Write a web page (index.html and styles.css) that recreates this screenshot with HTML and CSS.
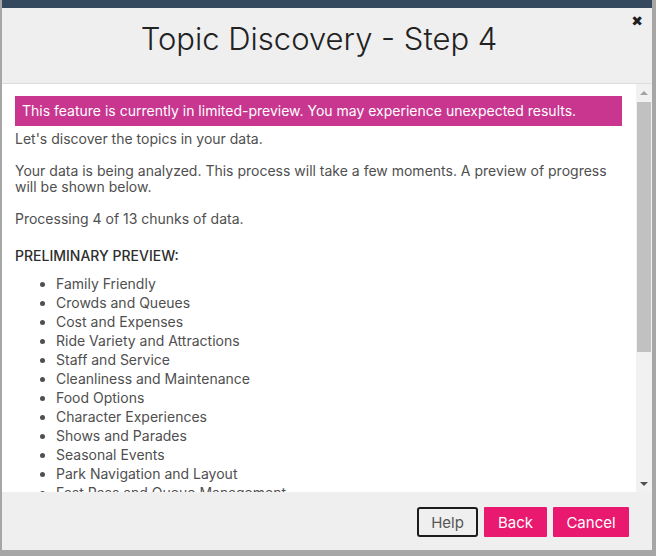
FILE: index.html
```html
<!DOCTYPE html>
<html lang="en">
<head>
<meta charset="utf-8">
<title>Topic Discovery - Step 4</title>
<link rel="stylesheet" href="styles.css">
</head>
<body>
<div class="dialog">
  <div class="dialog-header">
    <h1 class="title">Topic Discovery - Step 4</h1>
    <button class="close" aria-label="Close">&#x2716;</button>
  </div>
  <div class="dialog-body">
    <div class="content">
      <div class="alert">This feature is currently in limited-preview. You may experience unexpected results.</div>
      <p>Let's discover the topics in your data.</p>
      <p>Your data is being analyzed. This process will take a few moments. A preview of progress will be shown below.</p>
      <p class="processing">Processing 4 of 13 chunks of data.</p>
      <p class="preview-heading">PRELIMINARY PREVIEW:</p>
      <ul class="topics">
        <li>Family Friendly</li>
        <li>Crowds and Queues</li>
        <li>Cost and Expenses</li>
        <li>Ride Variety and Attractions</li>
        <li>Staff and Service</li>
        <li>Cleanliness and Maintenance</li>
        <li>Food Options</li>
        <li>Character Experiences</li>
        <li>Shows and Parades</li>
        <li>Seasonal Events</li>
        <li>Park Navigation and Layout</li>
        <li>Fast Pass and Queue Management</li>
      </ul>
    </div>
    <div class="scrollbar">
      <div class="sb-btn"><span class="arrow-up"></span></div>
      <div class="sb-thumb"></div>
      <div class="sb-track"></div>
      <div class="sb-btn"><span class="arrow-down"></span></div>
    </div>
  </div>
  <div class="dialog-footer">
    <button class="btn btn-help">Help</button>
    <button class="btn btn-primary btn-back">Back</button>
    <button class="btn btn-primary btn-cancel">Cancel</button>
  </div>
</div>
</body>
</html>
```
FILE: styles.css
```css
html, body {
  margin: 0;
  padding: 0;
}
body {
  background: #a6a6a6;
  font-family: Inter, "Open Sans", sans-serif;
  width: 656px;
  height: 556px;
  overflow: hidden;
}
.dialog {
  margin-left: 2px;
  width: 650px;
  height: 542px;
  border-top: 8px solid #34495e;
  background: #efefef;
  display: flex;
  flex-direction: column;
}
.dialog-header {
  position: relative;
  height: 62px;
  padding: 13px 16px 0 0;
  border-bottom: 1px solid #dcdcdc;
  text-align: center;
}
.title {
  margin: 0;
  font-size: 31px;
  font-weight: 300;
  line-height: 36px;
  color: #222;
}
.close {
  position: absolute;
  top: 5px;
  right: 9px;
  border: 0;
  background: transparent;
  padding: 0;
  font-family: "DejaVu Sans", sans-serif;
  font-size: 14px;
  line-height: 16px;
  color: #1e1e1e;
}
.dialog-body {
  height: 408px;
  display: flex;
  background: #fff;
}
.content {
  flex: 1;
  overflow: hidden;
  padding: 12px 14px 0 13px;
  color: #4f4f4f;
  font-size: 14px;
  line-height: 16px;
}
.alert {
  height: 30px;
  line-height: 30px;
  padding: 0 7px;
  background: #c8368f;
  color: #fff;
  margin-bottom: 5px;
  white-space: nowrap;
}
.content p {
  margin: 0 0 16px;
}
.content p.processing {
  margin-bottom: 21px;
}
.content p.preview-heading {
  margin-bottom: 10px;
  font-weight: 500;
  color: #2e2e2e;
}
.topics {
  margin: 0;
  padding-left: 41px;
}
.topics li {
  line-height: 19px;
}
.scrollbar {
  width: 16px;
  background: #f1f1f1;
  display: flex;
  flex-direction: column;
}
.sb-btn {
  height: 17px;
  display: flex;
  align-items: center;
  justify-content: center;
}
.arrow-up {
  width: 0;
  height: 0;
  border-left: 4px solid transparent;
  border-right: 4px solid transparent;
  border-bottom: 4px solid #a3a3a3;
}
.arrow-down {
  width: 0;
  height: 0;
  border-left: 4px solid transparent;
  border-right: 4px solid transparent;
  border-top: 4px solid #505050;
}
.sb-thumb {
  height: 250px;
  margin: 1px 1px 0 1px;
  background: #c1c1c1;
}
.sb-track {
  flex: 1;
}
.dialog-footer {
  flex: 1;
  display: flex;
  justify-content: flex-end;
  align-items: flex-start;
  padding: 15px 23px 0 0;
  gap: 6px;
}
.btn {
  height: 30px;
  padding: 0;
  font-family: Inter, "Open Sans", sans-serif;
  font-size: 15px;
  cursor: pointer;
}
.btn-help {
  width: 61px;
  background: #efefef;
  color: #555;
  border: 2px solid #1c1c1c;
  border-radius: 3px;
}
.btn-primary {
  background: #e8196f;
  color: #fff;
  border: 0;
  border-radius: 1px;
}
.btn-back {
  width: 63px;
}
.btn-cancel {
  width: 76px;
}
```
